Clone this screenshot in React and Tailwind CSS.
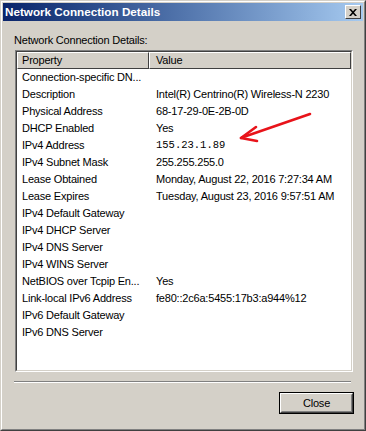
import React from "react";

const rows = [
  ["Connection-specific DN...", ""],
  ["Description", "Intel(R) Centrino(R) Wireless-N 2230"],
  ["Physical Address", "68-17-29-0E-2B-0D"],
  ["DHCP Enabled", "Yes"],
  ["IPv4 Address", "155.23.1.89", true],
  ["IPv4 Subnet Mask", "255.255.255.0"],
  ["Lease Obtained", "Monday, August 22, 2016 7:27:34 AM"],
  ["Lease Expires", "Tuesday, August 23, 2016 9:57:51 AM"],
  ["IPv4 Default Gateway", ""],
  ["IPv4 DHCP Server", ""],
  ["IPv4 DNS Server", ""],
  ["IPv4 WINS Server", ""],
  ["NetBIOS over Tcpip En...", "Yes"],
  ["Link-local IPv6 Address", "fe80::2c6a:5455:17b3:a944%12"],
  ["IPv6 Default Gateway", ""],
  ["IPv6 DNS Server", ""],
];

export default function App() {
  return (
    <div
      className="relative w-[366px] h-[431px] border border-t-[#d4d0c8] border-l-[#d4d0c8] border-r-[#404040] border-b-[#404040] text-[11px] text-black tracking-[-0.2px]"
      style={{ fontFamily: '"Liberation Sans", Arial, sans-serif' }}
    >
      <div className="w-full h-full border border-t-white border-l-white border-r-[#808080] border-b-[#808080] bg-[#d4d0c8] p-px flex flex-col">
        {/* Title bar */}
        <div className="h-[18px] shrink-0 flex items-center justify-between bg-gradient-to-r from-[#0a246a] to-[#a6caf0] pl-[2px] pr-[2px]">
          <span className="font-bold text-white text-[11.7px] leading-[14px] tracking-normal">Network Connection Details</span>
          <div className="w-[16px] h-[14px] bg-[#d4d0c8] border border-t-white border-l-white border-r-[#404040] border-b-[#404040] flex items-center justify-center">
            <svg width="8" height="7" viewBox="0 0 8 7">
              <path d="M0 0h2l2 2.2L6 0h2L5 3.5 8 7H6L4 4.8 2 7H0l3-3.5z" fill="#000" />
            </svg>
          </div>
        </div>

        {/* Content */}
        <div className="flex flex-col pt-[12px]">
          <div className="pl-[11px] h-[14px] leading-[14px]">Network Connection Details:</div>

          <div className="mt-[3px] ml-[12px] w-[338px] h-[322px] border border-t-[#808080] border-l-[#808080] border-r-white border-b-white">
            <div className="w-full h-full border border-t-[#404040] border-l-[#404040] border-r-[#d4d0c8] border-b-[#d4d0c8] bg-white flex flex-col">
              {/* Header */}
              <div className="flex h-[17px] shrink-0">
                <div className="w-[132px] h-full bg-[#d4d0c8] border border-t-white border-l-white border-r-[#404040] border-b-[#404040] flex items-center pl-[4px] leading-[13px]">
                  Property
                </div>
                <div className="flex-1 h-full bg-[#d4d0c8] border border-t-white border-l-white border-r-[#404040] border-b-[#404040] flex items-center pl-[6px] leading-[13px]">
                  Value
                </div>
              </div>
              {rows.map(([k, v, mono], i) => (
                <div key={i} className="flex h-[17px] shrink-0 items-center leading-[13px]">
                  <div className="w-[132px] pl-[5px] whitespace-nowrap">{k}</div>
                  <div
                    className={mono ? "pl-[7px] whitespace-nowrap text-[10.5px] tracking-normal" : "pl-[7px] whitespace-nowrap"}
                    style={mono ? { fontFamily: '"Liberation Mono", "Courier New", monospace' } : undefined}
                  >
                    {v}
                  </div>
                </div>
              ))}
            </div>
          </div>

          <div className="mt-[9px] ml-[11px] w-[337px] h-[2px] border-t border-t-[#808080] border-b border-b-white" />

          <div className="mt-[9px] ml-[276px] w-[75px] h-[22px] border border-black">
            <div className="w-full h-full border border-t-white border-l-white border-r-[#404040] border-b-[#404040]">
              <div className="w-full h-full border border-t-[#d4d0c8] border-l-[#d4d0c8] border-r-[#808080] border-b-[#808080] flex items-center justify-center bg-[#d4d0c8] leading-[13px]">
                Close
              </div>
            </div>
          </div>
        </div>
      </div>

      {/* Red annotation arrow */}
      <svg className="absolute left-0 top-0 pointer-events-none" width="366" height="431">
        <g stroke="#e8131a" strokeWidth="2.6" strokeLinecap="round" fill="none">
          <line x1="309" y1="113" x2="241" y2="136.5" />
          <line x1="240" y1="137" x2="255" y2="126" />
          <line x1="240" y1="137" x2="256" y2="140" />
        </g>
      </svg>
    </div>
  );
}
